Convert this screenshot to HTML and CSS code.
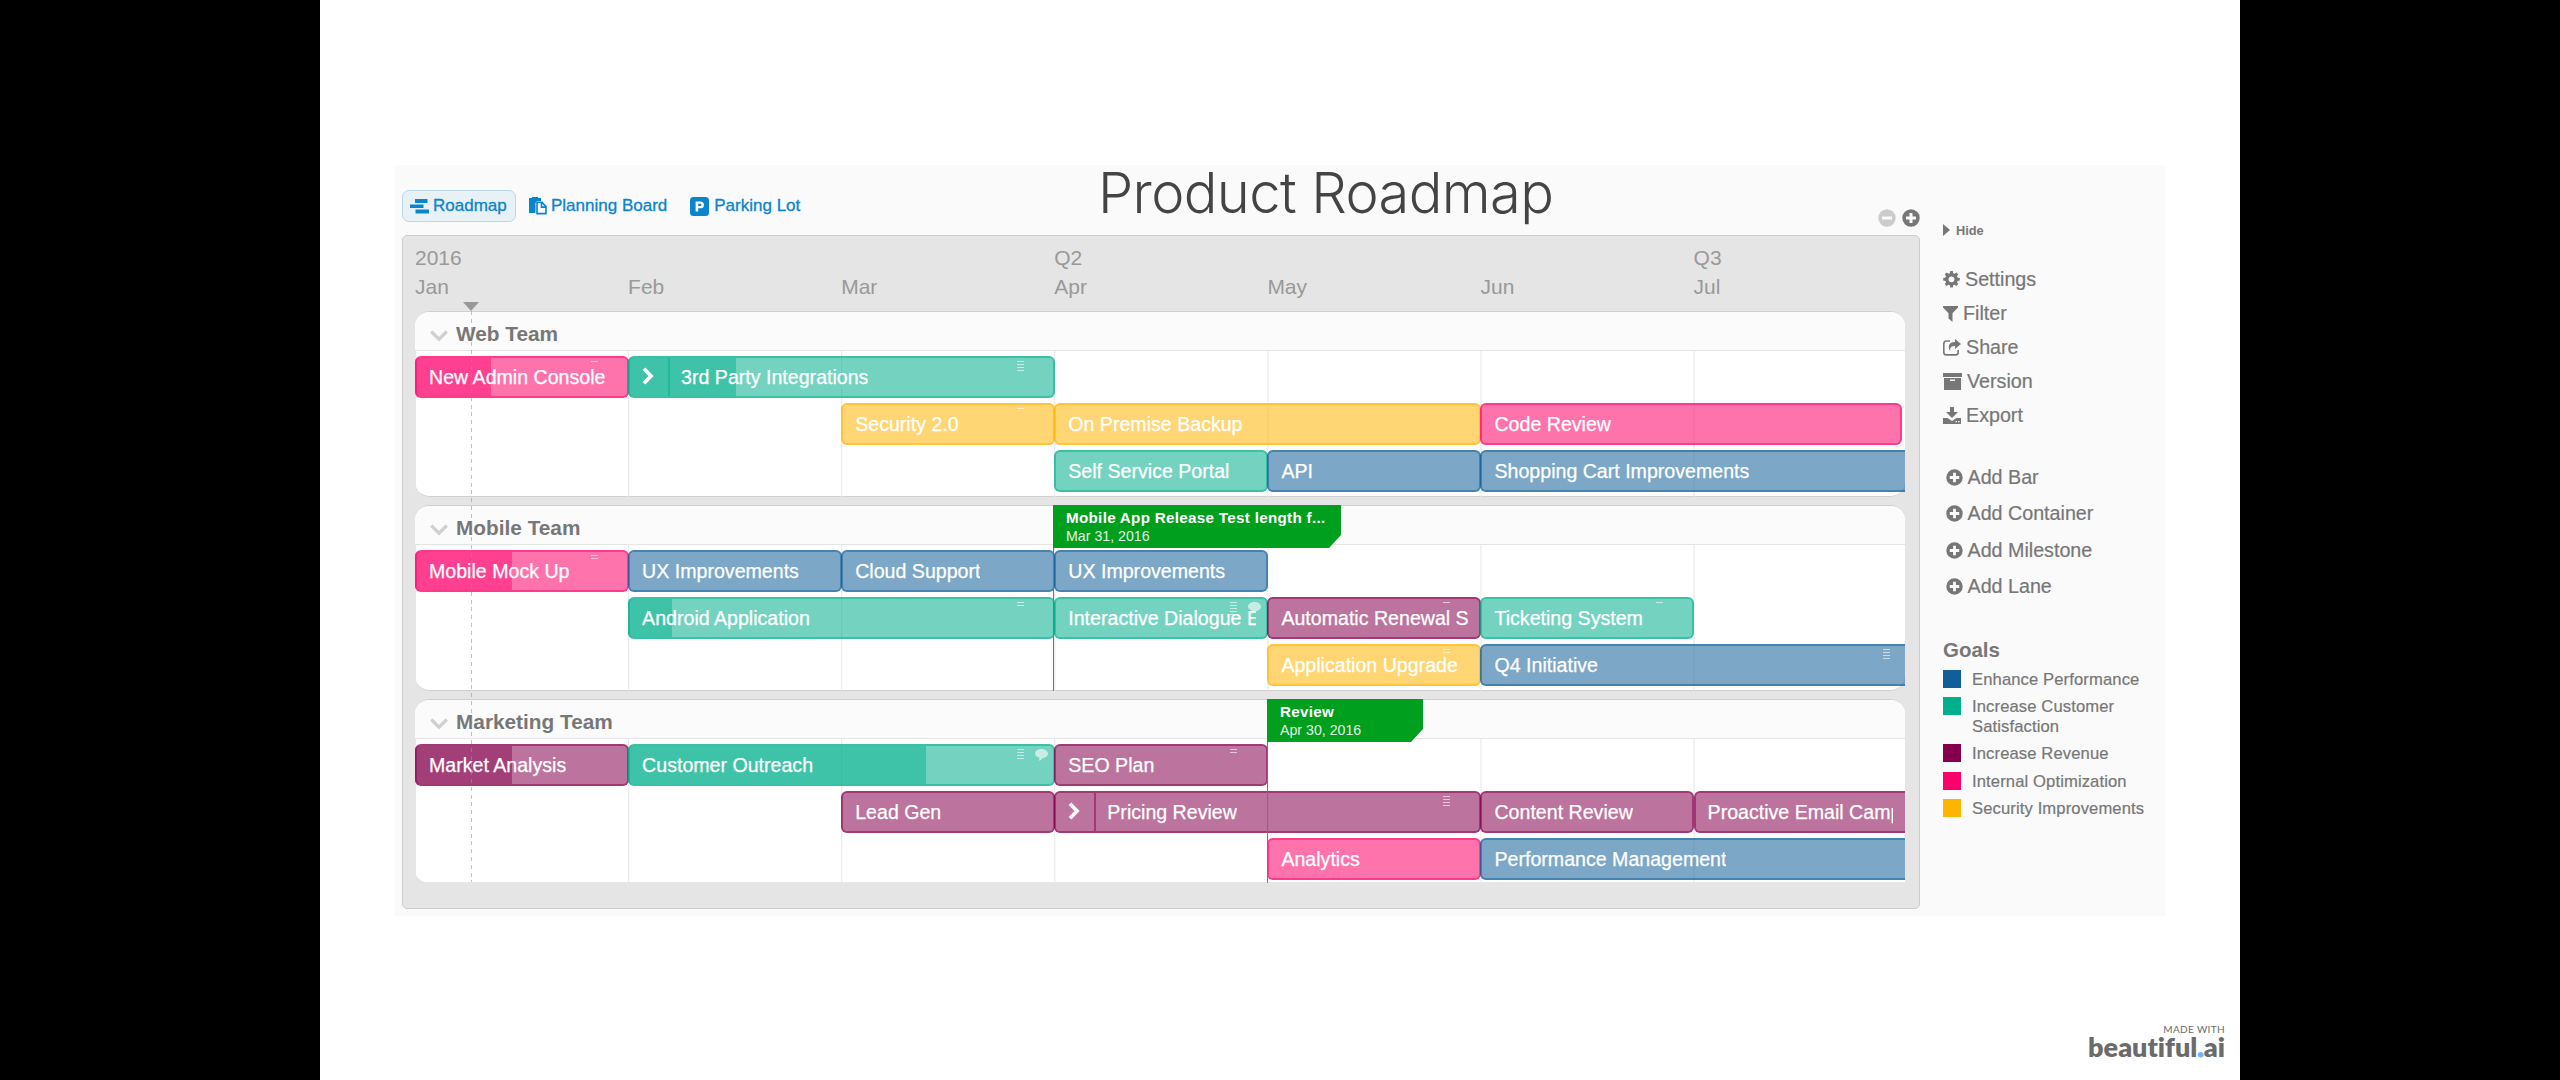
FILE: index.html
```html
<!DOCTYPE html>
<html lang="en">
<head>
<meta charset="utf-8">
<title>Product Roadmap</title>
<link rel="stylesheet" href="styles.css">
</head>
<body>
<svg class="defs" width="0" height="0" aria-hidden="true">
  <symbol id="plus" viewBox="0 0 18 18"><path fill="currentColor" fill-rule="evenodd" d="M9 .3a8.700 8.700 0 1 1 0 17.400A8.700 8.700 0 0 1 9 .3zM7.500 4v3.500H4v3h3.500V14h3v-3.500H14v-3h-3.500V4z"/></symbol>
  <symbol id="minus" viewBox="0 0 18 18"><path fill="currentColor" fill-rule="evenodd" d="M9 .3a8.700 8.700 0 1 1 0 17.400A8.700 8.700 0 0 1 9 .3zM4 7.500v3h10v-3z"/></symbol>
  <symbol id="down" viewBox="0 0 18 12"><path fill="none" stroke="currentColor" stroke-width="3.200" d="M1.200 1.500 9 9.200l7.800-7.700"/></symbol>
  <symbol id="right" viewBox="0 0 12 18"><path fill="none" stroke="currentColor" stroke-width="3.800" d="M2 1.800 9 9l-7 7.200"/></symbol>
  <symbol id="bubble" viewBox="0 0 13 12"><path fill="currentColor" d="M6.500 0C10 0 13 2 13 4.600S10.500 9 7.500 9.200C6.400 10.600 5 11.600 3.500 11.800c.7-.9 1-2 .9-3C1.800 8.200 0 6.600 0 4.600 0 2 3 0 6.500 0z"/></symbol>
</svg>
<main class="slide">
  <div class="app">
    <section class="main">
      <header class="topbar">
        <nav class="tabs">
          <a class="tab active"><svg width="19" height="15" viewBox="0 0 19 15"><path fill="currentColor" d="M5 0h12.500v4H5zM0 5.500h13.500v3.600H0zM5.500 10.500H19v4H5.500z"/></svg>Roadmap</a>
          <a class="tab board"><svg width="18" height="18" viewBox="0 0 18 18"><path fill="currentColor" d="M0 1h3V0h6v1h3v3H8L6.500 6v10H0z"/><path fill="none" stroke="currentColor" stroke-width="1.600" d="M8 5.300h5l4 4.300v7H8zM12.500 5.300v4.800H17"/></svg>Planning Board</a>
          <a class="tab lot"><svg width="19" height="19" viewBox="0 0 19 19"><path fill="currentColor" fill-rule="evenodd" d="M3.500 0h12A3.500 3.500 0 0 1 19 3.500v12a3.500 3.500 0 0 1-3.500 3.500h-12A3.500 3.500 0 0 1 0 15.500v-12A3.500 3.500 0 0 1 3.500 0zM5.600 4.500v10h2.600v-3.200h2.200c2.200 0 3.600-1.300 3.600-3.400s-1.400-3.400-3.600-3.400zm2.600 2.200h1.700c1 0 1.500.400 1.500 1.200s-.5 1.200-1.500 1.200H8.200z"/></svg>Parking Lot</a>
        </nav>
        <h1>Product Roadmap</h1>
        <div class="zoom"><svg class="off"><use href="#minus"/></svg><svg><use href="#plus"/></svg></div>
      </header>
      <div class="sheet">
        <div class="timeline">
          <div><span>2016</span><span>Jan</span></div>
          <div><span></span><span>Feb</span></div>
          <div><span></span><span>Mar</span></div>
          <div><span>Q2</span><span>Apr</span></div>
          <div><span></span><span>May</span></div>
          <div><span></span><span>Jun</span></div>
          <div><span>Q3</span><span>Jul</span></div>
        </div>
        <div class="lanes">
          <section class="lane">
            <h2><svg><use href="#down"/></svg>Web Team</h2>
            <div class="rows">
              <div class="row">
                <div class="bar pink c1"><i class="done" style="width:76px"></i><span>New Admin Console</span><b class="meta n1"></b></div>
                <div class="bar teal c2 w2"><i class="done" style="width:108px"></i><em class="expand"><svg><use href="#right"/></svg></em><span>3rd Party Integrations</span><b class="meta n4"></b></div>
              </div>
              <div class="row">
                <div class="bar yellow c3"><span>Security 2.0</span><b class="meta n1"></b></div>
                <div class="bar yellow c4 w2"><span>On Premise Backup</span></div>
                <div class="bar pink c6 w2 short"><span>Code Review</span></div>
              </div>
              <div class="row">
                <div class="bar teal c4"><span>Self Service Portal</span></div>
                <div class="bar blue c5"><span>API</span></div>
                <div class="bar blue c6 w2 open"><span>Shopping Cart Improvements</span></div>
              </div>
            </div>
          </section>
          <section class="lane">
            <h2><svg><use href="#down"/></svg>Mobile Team</h2>
            <div class="rows">
              <div class="row">
                <div class="bar pink c1"><i class="done" style="width:97px"></i><span>Mobile Mock Up</span><b class="meta n2"></b></div>
                <div class="bar blue c2"><span>UX Improvements</span></div>
                <div class="bar blue c3"><span>Cloud Support</span></div>
                <div class="bar blue c4"><span>UX Improvements</span></div>
              </div>
              <div class="row">
                <div class="bar teal c2 w2"><i class="done" style="width:44px"></i><span>Android Application</span><b class="meta n2"></b></div>
                <div class="bar teal c4 tight"><span>Interactive Dialogue E</span><b class="meta n5"></b><svg class="note"><use href="#bubble"/></svg></div>
                <div class="bar purple c5 tight"><span>Automatic Renewal S</span><b class="meta n1"></b></div>
                <div class="bar teal c6"><span>Ticketing System</span><b class="meta n1"></b></div>
              </div>
              <div class="row">
                <div class="bar yellow c5"><span>Application Upgrade</span><b class="meta n2"></b></div>
                <div class="bar blue c6 w2 open"><span>Q4 Initiative</span><b class="meta n4"></b></div>
              </div>
            </div>
            <div class="milestone release"><div class="flag"><strong>Mobile App Release Test length f...</strong><time>Mar 31, 2016</time></div></div>
          </section>
          <section class="lane last">
            <h2><svg><use href="#down"/></svg>Marketing Team</h2>
            <div class="rows">
              <div class="row">
                <div class="bar purple c1"><i class="done" style="width:97px"></i><span>Market Analysis</span></div>
                <div class="bar teal c2 w2"><i class="done" style="width:298px"></i><span>Customer Outreach</span><b class="meta n4"></b><svg class="note"><use href="#bubble"/></svg></div>
                <div class="bar purple c4"><span>SEO Plan</span><b class="meta n2"></b></div>
              </div>
              <div class="row">
                <div class="bar purple c3"><span>Lead Gen</span></div>
                <div class="bar purple c4 w2"><em class="expand"><svg><use href="#right"/></svg></em><span>Pricing Review</span><b class="meta n4"></b></div>
                <div class="bar purple c6"><span>Content Review</span></div>
                <div class="bar purple c7 open"><span>Proactive Email Camp</span></div>
              </div>
              <div class="row">
                <div class="bar pink c5"><span>Analytics</span></div>
                <div class="bar blue c6 w2 open"><span>Performance Management</span></div>
              </div>
            </div>
            <div class="milestone review"><div class="flag"><strong>Review</strong><time>Apr 30, 2016</time></div></div>
          </section>
          <div class="today"></div>
        </div>
      </div>
    </section>
    <aside class="side">
      <a class="hide"><svg width="7" height="12" viewBox="0 0 7 12"><path fill="currentColor" d="M0 0l7 6-7 6z"/></svg>Hide</a>
      <ul class="menu">
        <li><svg width="17" height="17" viewBox="0 0 17 17"><path fill="currentColor" fill-rule="evenodd" d="M7.200 0h2.600l.4 2.200 1.300.5 1.900-1.200 1.800 1.800-1.200 1.900.5 1.300 2.300.4v2.600l-2.300.4-.5 1.300 1.200 1.900-1.800 1.800-1.900-1.200-1.300.5-.4 2.300H7.200l-.4-2.300-1.300-.5-1.900 1.200-1.800-1.800L3 11.200l-.5-1.300L.2 9.500V6.900l2.300-.4L3 5.200 1.800 3.300l1.800-1.800 1.900 1.200 1.300-.5zM8.500 5.400a2.900 2.900 0 1 0 0 5.800 2.900 2.900 0 0 0 0-5.800z"/></svg>Settings</li>
        <li><svg width="15" height="16" viewBox="0 0 15 16"><path fill="currentColor" d="M0 0h15v1.500L9.500 7.300V16L5.500 12.500V7.300L0 1.500z"/></svg>Filter</li>
        <li><svg width="18" height="17" viewBox="0 0 18 17"><path fill="none" stroke="currentColor" stroke-width="1.600" d="M7 2H3.500Q.8 2 .8 4.700v8.500q0 2.700 2.700 2.700h9q2.700 0 2.700-2.700V11"/><path fill="currentColor" d="M12 0l6 5-6 5V7C8.500 7 7 8 7.200 12 4.500 8 5.500 3 12 3z"/></svg>Share</li>
        <li><svg width="19" height="17" viewBox="0 0 19 17"><path fill="currentColor" fill-rule="evenodd" d="M0 0h19v4H0zM1 5h17v12H1zM7 6.500V8h5V6.500z"/></svg>Version</li>
        <li><svg width="18" height="17" viewBox="0 0 18 17"><path fill="currentColor" fill-rule="evenodd" d="M7 0h4v5h4L9 11 3 5h4zM0 11h4.500L9 14l4.500-3H18v6H0zM12.500 14v1.200H14V14zm2.500 0v1.200h1.500V14z"/></svg>Export</li>
      </ul>
      <ul class="menu add">
        <li><svg width="17" height="17"><use href="#plus"/></svg>Add Bar</li>
        <li><svg width="17" height="17"><use href="#plus"/></svg>Add Container</li>
        <li><svg width="17" height="17"><use href="#plus"/></svg>Add Milestone</li>
        <li><svg width="17" height="17"><use href="#plus"/></svg>Add Lane</li>
      </ul>
      <h3>Goals</h3>
      <ul class="goals">
        <li class="blue">Enhance Performance</li>
        <li class="teal">Increase Customer<br>Satisfaction</li>
        <li class="purple">Increase Revenue</li>
        <li class="pink">Internal Optimization</li>
        <li class="yellow">Security Improvements</li>
      </ul>
    </aside>
  </div>
  <footer class="brand"><small>MADE WITH</small><strong>beautiful<i>.</i>ai</strong></footer>
</main>
</body>
</html>
```
FILE: styles.css
```css
* { box-sizing: border-box; }
body {
  margin: 0;
  background: #000;
  font-family: "Liberation Sans", Arial, sans-serif;
  color: #777;
}
h1, h2, h3, ul { margin: 0; padding: 0; }
ul { list-style: none; }
.defs { position: absolute; }
svg { display: block; flex: none; }

.blue { --c: 17, 95, 152; }
.teal { --c: 0, 175, 140; }
.purple { --c: 133, 0, 76; }
.pink { --c: 255, 0, 106; }
.yellow { --c: 255, 180, 0; }

.slide {
  display: flex;
  flex-direction: column;
  justify-content: space-between;
  width: 1920px;
  height: 1080px;
  margin: 0 auto;
  padding: 165px 15px 19px 75px;
  background: #fff;
}
.app {
  display: flex;
  width: 1770px;
  height: 751px;
  padding-left: 7px;
  background: #fafafa;
}
.main { width: 1518px; }

/* top bar */
.topbar {
  display: grid;
  grid-template-columns: 696px 1fr auto;
  height: 70px;
}
.tabs {
  display: flex;
  align-items: center;
  height: 32px;
  margin-top: 25px;
}
.tab {
  display: flex;
  align-items: center;
  gap: 4px;
  height: 32px;
  font-size: 17px;
  color: #0a84cd;
  -webkit-text-stroke: .3px;
}
.tab.active {
  gap: 4px;
  width: 114px;
  padding-left: 7px;
  border: 1px solid #b5d9ec;
  border-radius: 7px;
  background: #e8f1f6;
}
.tab.board { margin-left: 13px; }
.tab.lot { gap: 5px; margin-left: 23px; }
h1 {
  font: 300 56px/56px Inter, sans-serif;
  color: #444;
  white-space: nowrap;
  letter-spacing: -.6px;
}
.zoom {
  display: flex;
  gap: 6px;
  margin-top: 44px;
}
.zoom svg { width: 18px; height: 18px; }
.zoom .off { color: #ccc; }

/* sheet */
.sheet {
  width: 1518px;
  height: 674px;
  padding: 0 14px 0 12px;
  border: 1px solid #ccc;
  border-radius: 5px;
  background: #e5e5e5;
}
.timeline {
  display: grid;
  grid-template-columns: repeat(6, 213.1px) 1fr;
  height: 75px;
  padding-top: 7px;
  font-size: 21px;
  color: #999;
}
.timeline span { display: block; height: 29px; line-height: 29px; }

.lanes {
  display: flex;
  flex-direction: column;
  gap: 8px;
  position: relative;
}
.lane {
  position: relative;
  height: 186px;
  border: 1px solid #d0d0d0;
  border-width: 1px 0;
  border-radius: 15px;
  background: #fff;
}
.lane.last {
  height: 183px;
  border-bottom: 0;
  border-radius: 15px 15px 0 12px;
}
h2 {
  display: flex;
  align-items: center;
  gap: 8px;
  height: 39px;
  padding: 6px 0 0 15px;
  border-bottom: 1px solid #e4e4e4;
  border-radius: 14px 14px 0 0;
  background: #fbfbfb;
  font-size: 20.8px;
  line-height: 30px;
}
h2 svg { width: 18px; height: 12px; color: #d0d0d0; margin-top: 3px; }
.rows {
  display: grid;
  gap: 5px;
  padding: 5px 0;
  background: linear-gradient(90deg, #e6e6e6 1.2px, transparent 1.2px) 213.1px 0 / 213.1px 100%;
}
.last .rows { padding-bottom: 2px; }
.row {
  display: grid;
  grid-template-columns: repeat(6, 213.1px) 1fr;
  height: 42px;
}
.c1 { grid-column-start: 1; }
.c2 { grid-column-start: 2; }
.c3 { grid-column-start: 3; }
.c4 { grid-column-start: 4; }
.c5 { grid-column-start: 5; }
.c6 { grid-column-start: 6; }
.c7 { grid-column-start: 7; }
.w2 { grid-column-end: span 2; }

.bar {
  position: relative;
  display: flex;
  align-items: center;
  min-width: 0;
  grid-row: 1;
  padding: 0 12px;
  margin-right: -.5px;
  border: 2px solid rgba(var(--c), .5);
  border-radius: 6px;
  background: rgba(var(--c), .55);
  color: #fff;
  font-size: 19.6px;
  white-space: nowrap;
  -webkit-text-stroke: .25px;
}
.bar span { position: relative; overflow: hidden; line-height: 28px; margin-bottom: 1px; }
.bar.open { border-right: 0; border-radius: 6px 0 0 6px; margin-right: 0; }
.bar.short { margin-right: 3px; }
.bar.tight { padding-right: 10px; }
.done {
  position: absolute;
  left: -2px;
  top: 0;
  bottom: 0;
  border-radius: 4px 0 0 4px;
  background: rgba(var(--c), .45);
}
.expand {
  position: relative;
  display: flex;
  align-items: center;
  align-self: stretch;
  width: 28px;
  margin-right: 11px;
  border-right: 2px solid rgba(var(--c), .5);
}
.expand svg { width: 12px; height: 18px; margin-bottom: 2px; }

/* detail-line count and comment marks */
.meta {
  position: absolute;
  top: 3px;
  right: 29px;
  width: 7px;
  background: linear-gradient(rgba(255, 255, 255, .6) 1px, transparent 1px) 0 0 / 7px 3px;
}
.open .meta { right: 15px; }
.n1 { height: 1px; }
.n2 { height: 4px; }
.n4 { height: 10px; }
.n5 { height: 13px; }
.note { position: absolute; top: 3px; right: 5px; width: 13px; height: 12px; opacity: .6; }

/* milestones */
.milestone {
  position: absolute;
  top: -1px;
  bottom: -1px;
  border-left: 1px solid #22ab3f;
}
.release { left: 638px; }
.review { left: 852px; }
.flag {
  width: 156px;
  height: 43px;
  margin-left: -1px;
  padding: 4px 0 0 13px;
  background: #009f1d;
  clip-path: polygon(0 0, 100% 0, 100% 30px, calc(100% - 12px) 100%, 0 100%);
  color: #fff;
  white-space: nowrap;
}
.release .flag { width: 288px; }
.flag strong, .flag time { display: block; font-size: 15.2px; line-height: 18px; }
.flag strong { letter-spacing: .3px; }
.flag time { font-size: 14.2px; color: #e0f3e3; }

/* current date */
.today {
  position: absolute;
  left: 56px;
  top: 0;
  bottom: 0;
  width: 1px;
  background: repeating-linear-gradient(rgba(245, 110, 100, .6) 0 4px, transparent 4px 7.8px);
}
.today::before {
  content: "";
  position: absolute;
  left: -8px;
  top: -9px;
  border: 8px solid transparent;
  border-top: 9px solid #999;
  border-bottom: 0;
}

/* sidebar */
.side { padding: 58px 0 0 23px; }
.hide {
  display: flex;
  align-items: center;
  gap: 6px;
  height: 14px;
  font-size: 12.8px;
  font-weight: bold;
}
.menu { margin-top: 26px; font-size: 19.7px; -webkit-text-stroke: .2px; }
.menu li {
  display: flex;
  align-items: center;
  gap: 5px;
  height: 33.8px;
}
.menu.add { margin-top: 27px; padding-left: 2.5px; }
.menu.add li { height: 36.5px; }
h3 { margin-top: 30px; font-size: 20.5px; line-height: 30px; }
.goals {
  display: grid;
  gap: 8px;
  margin-top: 5px;
  font-size: 16.6px;
  letter-spacing: .12px;
  -webkit-text-stroke: .2px;
}
.goals li { position: relative; padding-left: 29px; line-height: 19.5px; }
.goals li::before {
  content: "";
  position: absolute;
  left: 0;
  top: 0;
  width: 18px;
  height: 18px;
  background: rgb(var(--c));
}

.brand {
  display: flex;
  flex-direction: column;
  align-items: flex-end;
  padding-bottom: 1px;
  font-family: Lato, sans-serif;
  color: #6b6b6b;
}
.brand small { font-size: 10px; line-height: 12px; letter-spacing: .35px; margin-bottom: -1px; }
.brand strong {
  font-size: 27px;
  line-height: 26px;
  font-weight: 800;
  font-variant-ligatures: none;
}
.brand i { font-style: normal; color: #6cb5ff; -webkit-text-stroke: 1px; }
```
